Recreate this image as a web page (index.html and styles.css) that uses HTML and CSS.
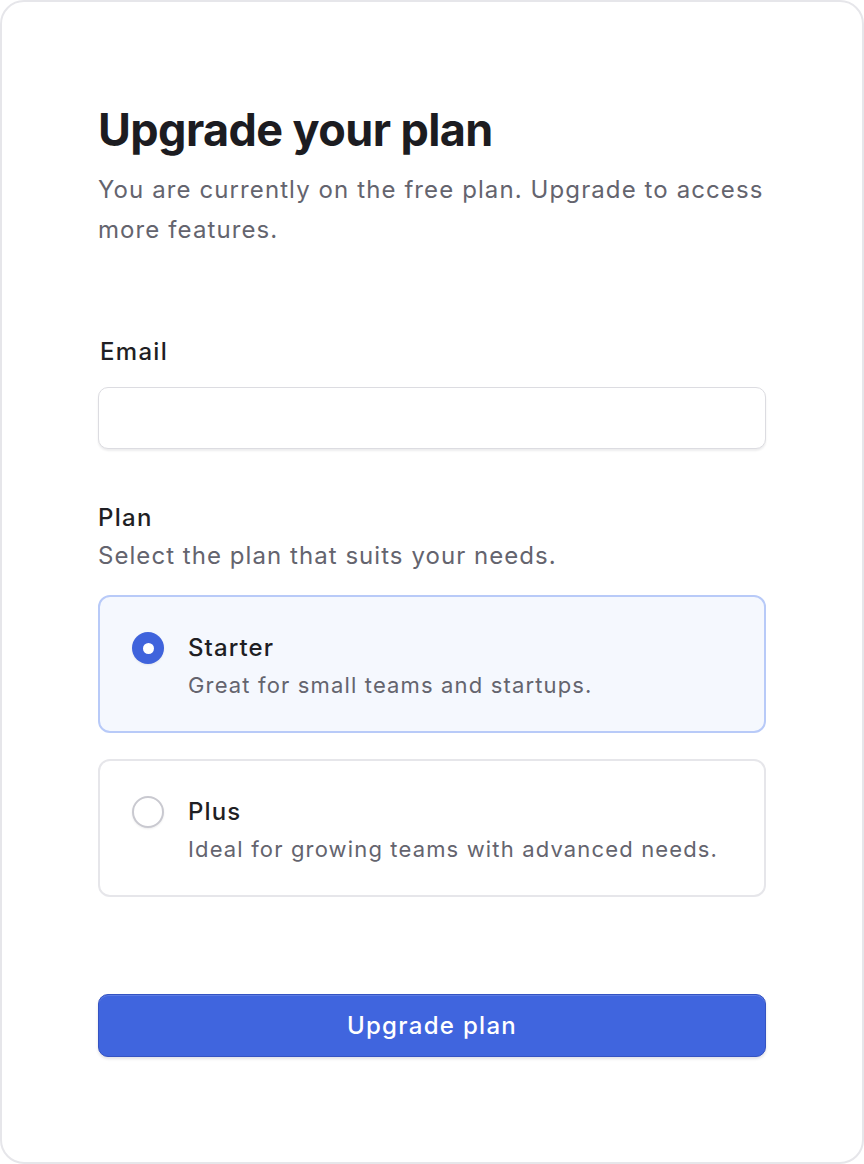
FILE: index.html
```html
<!DOCTYPE html>
<html lang="en">
<head>
    <meta charset="UTF-8">
    <meta name="viewport" content="width=device-width, initial-scale=1.0">
    <title>Upgrade your plan</title>
    <link rel="stylesheet" href="styles.css">
</head>
<body>
    <div class="card">
        <h1>Upgrade your plan</h1>
        <p class="subtitle">You are currently on the free plan. Upgrade to access more features.</p>

        <label class="field-label" for="email">Email</label>
        <input class="text-input" type="email" id="email">

        <div class="group-label">Plan</div>
        <p class="group-desc">Select the plan that suits your needs.</p>

        <div class="plans">
            <label class="plan plan-selected">
                <span class="radio radio-checked"></span>
                <span class="plan-text">
                    <span class="plan-name">Starter</span>
                    <span class="plan-desc">Great for small teams and startups.</span>
                </span>
            </label>
            <label class="plan">
                <span class="radio"></span>
                <span class="plan-text">
                    <span class="plan-name">Plus</span>
                    <span class="plan-desc">Ideal for growing teams with advanced needs.</span>
                </span>
            </label>
        </div>

        <button class="submit">Upgrade plan</button>
    </div>
</body>
</html>
```

FILE: styles.css
```css
body {
    margin: 0;
    font-family: Inter, "Noto Sans", sans-serif;
    background-color: #fff;
}
.card {
    box-sizing: border-box;
    height: 1164px;
    border: 2px solid #e6e6ea;
    border-radius: 24px;
    padding: 102px 96px 0 96px;
    display: flex;
    flex-direction: column;
}
.card h1 {
    margin: 0;
    font-size: 45px;
    line-height: 52px;
    font-weight: 680;
    letter-spacing: -0.6px;
    color: #1c1c21;
}
.subtitle {
    margin: 14px 0 0 0;
    font-size: 24px;
    line-height: 40px;
    color: #64646e;
    letter-spacing: 1.1px;
}
.field-label {
    margin-top: 86px;
    padding-left: 2px;
    font-size: 24px;
    line-height: 32px;
    font-weight: 500;
    color: #1f1f24;
    letter-spacing: 1.3px;
}
.text-input {
    box-sizing: border-box;
    margin-top: 19px;
    height: 62px;
    width: 100%;
    border: 1.5px solid #dcdce1;
    border-radius: 10px;
    box-shadow: 0 2px 2px rgba(20, 20, 40, 0.08);
    font: inherit;
    font-size: 22px;
    padding: 0 18px;
}
.group-label {
    margin-top: 53px;
    font-size: 24px;
    line-height: 32px;
    font-weight: 500;
    color: #1f1f24;
    letter-spacing: 1.3px;
}
.group-desc {
    margin: 4px 0 0 0;
    font-size: 24px;
    line-height: 36px;
    color: #64646e;
    letter-spacing: 1.05px;
}
.plans {
    margin-top: 21px;
    display: flex;
    flex-direction: column;
    gap: 26px;
}
.plan {
    display: flex;
    align-items: flex-start;
    gap: 24px;
    border: 2px solid #e6e6ea;
    border-radius: 12px;
    padding: 35px 32px 30px 32px;
    background-color: #fff;
}
.plan-selected {
    background-color: #f5f8fe;
    border-color: #b8caf8;
}
.radio {
    box-sizing: border-box;
    flex: none;
    width: 32px;
    height: 32px;
    border-radius: 50%;
    border: 2px solid #c9c9d0;
    background-color: #fff;
    box-shadow: 0 1px 2px rgba(20, 20, 40, 0.08);
    display: flex;
    align-items: center;
    justify-content: center;
}
.radio-checked {
    border: none;
    background-color: #3f63dc;
}
.radio-checked::after {
    content: "";
    width: 11px;
    height: 11px;
    border-radius: 50%;
    background-color: #fff;
}
.plan-text {
    display: flex;
    flex-direction: column;
    gap: 5px;
}
.plan-name {
    font-size: 24px;
    line-height: 32px;
    font-weight: 500;
    color: #1f1f24;
    letter-spacing: 1.1px;
}
.plan-desc {
    font-size: 22px;
    line-height: 32px;
    color: #64646e;
    letter-spacing: 1.15px;
}
.submit {
    margin-top: 97px;
    height: 63px;
    width: 100%;
    border: 1.5px solid #3553c2;
    border-radius: 10px;
    background-color: #4065de;
    color: #fff;
    font: inherit;
    font-size: 24px;
    font-weight: 500;
    letter-spacing: 1.3px;
    box-shadow: inset 0 1px 0 rgba(255, 255, 255, 0.15), 0 2px 3px rgba(20, 20, 60, 0.12);
    cursor: pointer;
}
```
